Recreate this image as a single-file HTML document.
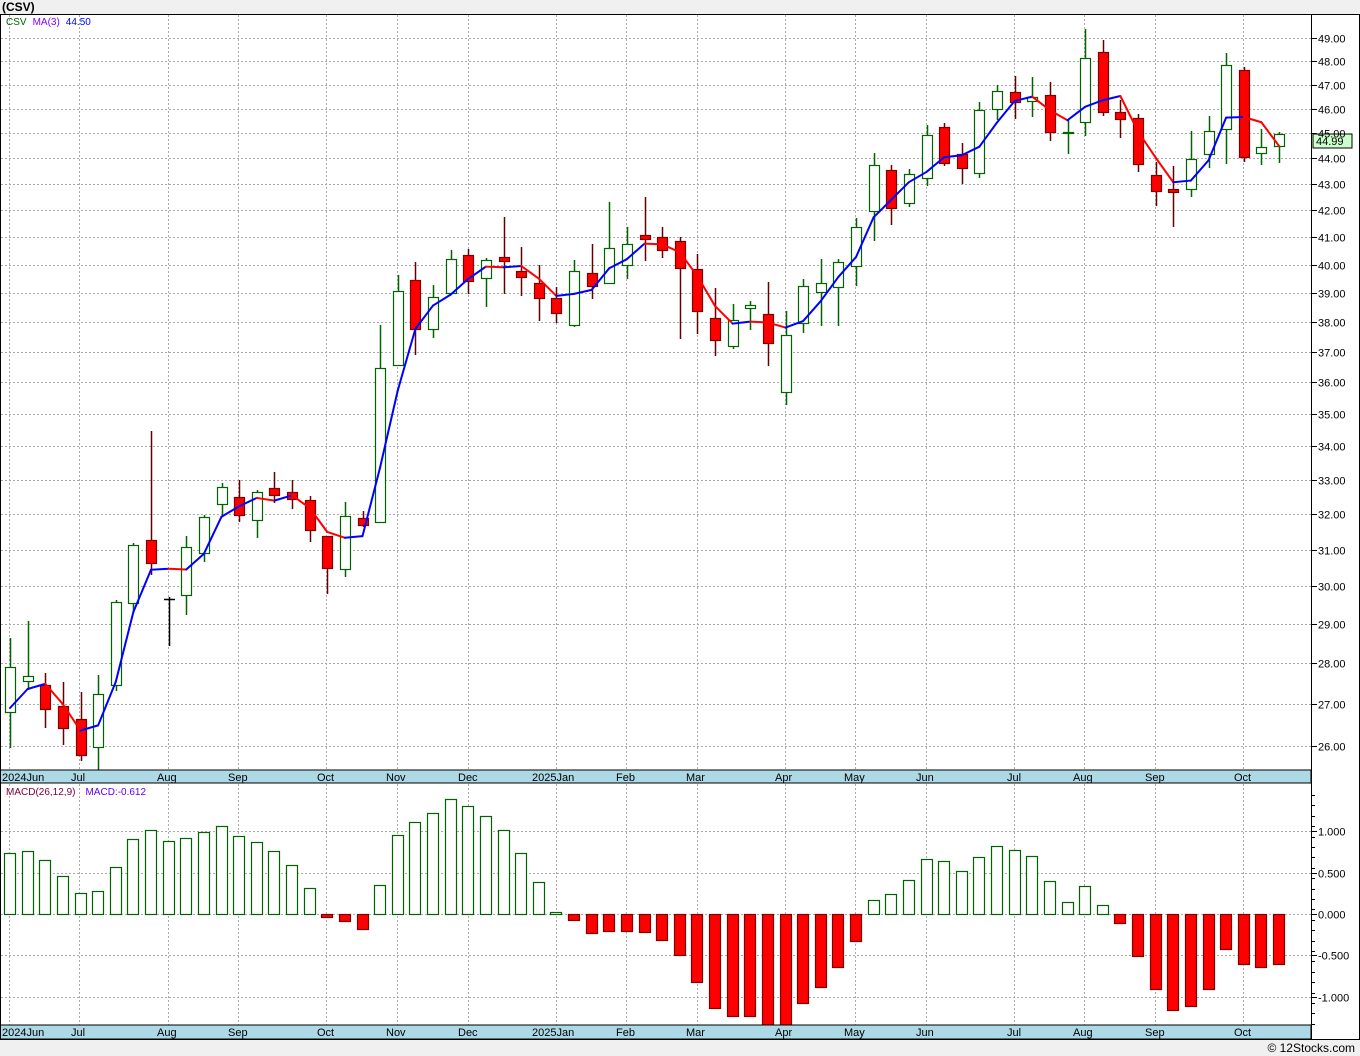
<!DOCTYPE html>
<html><head><meta charset="utf-8">
<style>
html,body{margin:0;padding:0;background:#f0f0f0;width:1360px;height:1056px;overflow:hidden;font-family:"Liberation Sans","DejaVu Sans",sans-serif;}
#wrap{position:relative;width:1360px;height:1056px;}
svg{position:absolute;left:0;top:0;}
</style></head>
<body><div id="wrap">
<svg id="c" width="1360" height="1056" xmlns="http://www.w3.org/2000/svg" font-family="Liberation Sans, DejaVu Sans, sans-serif">
<rect x="0" y="0" width="1360" height="1056" fill="#f0f0f0"/>
<rect x="0" y="14" width="1360" height="1026" fill="#ffffff"/>
<text x="2" y="11" font-size="12" font-weight="bold" fill="#000">(CSV)</text>
<g id="grid"></g>
<g id="candles"></g>
<g id="ma"></g>
<g id="macd"></g>
<!-- axis bands -->
<rect x="0" y="770" width="1311" height="13" fill="#add8e6" stroke="#000" stroke-width="1"/>
<rect x="0" y="1025" width="1311" height="14" fill="#add8e6" stroke="#000" stroke-width="1"/>
<line x1="0.5" y1="14" x2="0.5" y2="1040" stroke="#000"/>
<line x1="1311.5" y1="14" x2="1311.5" y2="1040" stroke="#000"/>
<line x1="0" y1="14.5" x2="1360" y2="14.5" stroke="#000"/>
<line x1="0" y1="1039.5" x2="1360" y2="1039.5" stroke="#000"/>
<line x1="1359.5" y1="14" x2="1359.5" y2="1040" stroke="#000"/>
<g id="labels" font-size="11" fill="#000">
<text x="2" y="781">2024Jun</text><text x="71" y="781">Jul</text><text x="157" y="781">Aug</text><text x="228" y="781">Sep</text><text x="317" y="781">Oct</text><text x="386" y="781">Nov</text><text x="458" y="781">Dec</text><text x="532" y="781">2025Jan</text><text x="616" y="781">Feb</text><text x="686" y="781">Mar</text><text x="775" y="781">Apr</text><text x="844" y="781">May</text><text x="916" y="781">Jun</text><text x="1007" y="781">Jul</text><text x="1073" y="781">Aug</text><text x="1145" y="781">Sep</text><text x="1234" y="781">Oct</text>
<text x="2" y="1036">2024Jun</text><text x="71" y="1036">Jul</text><text x="157" y="1036">Aug</text><text x="228" y="1036">Sep</text><text x="317" y="1036">Oct</text><text x="386" y="1036">Nov</text><text x="458" y="1036">Dec</text><text x="532" y="1036">2025Jan</text><text x="616" y="1036">Feb</text><text x="686" y="1036">Mar</text><text x="775" y="1036">Apr</text><text x="844" y="1036">May</text><text x="916" y="1036">Jun</text><text x="1007" y="1036">Jul</text><text x="1073" y="1036">Aug</text><text x="1145" y="1036">Sep</text><text x="1234" y="1036">Oct</text>
</g>
<text x="6" y="25" font-size="10"><tspan fill="#006400">CSV</tspan><tspan fill="#8000ff" dx="6">MA(3)</tspan><tspan fill="#0000ff" dx="6">44.50</tspan></text>
<text x="6" y="795" font-size="10"><tspan fill="#800040">MACD(26,12,9)</tspan><tspan fill="#6000ff" dx="10">MACD:-0.612</tspan></text>
<rect x="1313" y="134" width="39" height="14" fill="#ccffcc" stroke="#000"/>
<text x="1316" y="145" font-size="11" fill="#000">44.99</text>
<text x="1355" y="1052" font-size="12" fill="#000" text-anchor="end">© 12Stocks.com</text>
</svg>
<script>
var NS="http://www.w3.org/2000/svg";
function el(p,t,a){var e=document.createElementNS(NS,t);for(var k in a)e.setAttribute(k,a[k]);p.appendChild(e);return e;}
var grid=document.getElementById('grid'),cg=document.getElementById('candles'),mg=document.getElementById('ma'),md=document.getElementById('macd'),svg=document.getElementById('c');
function py(p){return 4386.3-1117.3*Math.log(p);}
var gx=[9,79,168,238,326,397,468,556,626,697,785,855,926,1014,1084,1155,1243];
gx.forEach(function(x){
 el(grid,'line',{x1:x+.5,y1:15,x2:x+.5,y2:770,stroke:'#aaa','stroke-dasharray':'2,2'});
 el(grid,'line',{x1:x+.5,y1:784,x2:x+.5,y2:1025,stroke:'#aaa','stroke-dasharray':'2,2'});
});
for(var p=26;p<=49;p++){
 var y=Math.round(py(p))+.5;
 el(grid,'line',{x1:1,y1:y,x2:1311,y2:y,stroke:'#aaa','stroke-dasharray':'2,2'});
 el(grid,'line',{x1:1311,y1:y,x2:1317,y2:y,stroke:'#000'});
 var t=el(svg,'text',{x:1318,y:y+4,'font-size':11,fill:'#000'});t.textContent=p.toFixed(2);
}
[[831,'1.000'],[873,'0.500'],[914,'0.000'],[955,'-0.500'],[997,'-1.000']].forEach(function(a){
 var y=a[0]+.5;
 el(grid,'line',{x1:1,y1:y,x2:1311,y2:y,stroke:'#aaa','stroke-dasharray':'2,2'});
 el(grid,'line',{x1:1311,y1:y,x2:1317,y2:y,stroke:'#000'});
 var t=el(svg,'text',{x:1318,y:y+4,'font-size':11,fill:'#000'});t.textContent=a[1];
});
for(var y=795;y<1025;y+=10.4){el(grid,'line',{x1:1311,y1:Math.round(y)+.5,x2:1315,y2:Math.round(y)+.5,stroke:'#000'});}
// candles: [type, open/top, bottom, high, low]  g=green(top=close), r=red(top=open)
var C=[
['g',667,712,638,748],['g',676,681,621,690],['r',685,709,673,728],['r',706,728,682,745],['r',719,755,692,761],
['g',694,747,675,770],['g',602,685,600,691],['g',545,603,543,612],['r',540,563,431,575],['k',599,599,597,646],
['g',547,595,536,615],['g',517,553,515,562],['g',487,504,483,517],['r',497,515,480,522],['g',492,520,490,538],
['r',488,495,472,503],['r',492,499,480,509],['r',500,530,496,542],['r',536,568,536,594],['g',516,569,502,577],
['r',518,525,511,527],['g',368,522,325,522],['g',291,365,275,365],['r',280,329,262,355],['g',297,329,285,338],
['g',259,293,250,293],['r',255,281,249,294],['g',260,278,258,307],['r',257,261,217,294],['r',271,277,247,296],
['r',283,298,265,321],['r',298,313,287,323],['g',271,325,260,327],['r',273,286,244,299],['g',248,283,202,283],
['g',244,265,227,279],['r',235,239,197,261],['r',237,250,227,258],['r',241,268,237,339],['r',269,311,254,334],
['r',318,340,288,356],['g',320,346,304,349],['g',305,308,301,330],['r',314,343,282,366],['g',335,392,311,405],
['g',286,323,279,333],['g',283,292,259,326],['g',262,287,259,326],['g',227,266,218,286],['g',165,211,153,241],
['r',170,208,165,225],['g',174,203,169,207],['g',135,178,125,186],['r',127,163,123,166],['r',154,168,143,184],
['g',110,173,102,178],['g',91,109,85,120],['r',92,102,76,119],['g',97,101,77,117],['r',95,132,82,141],
['g',132,133,120,154],['g',58,122,29,136],['r',52,112,40,116],['r',112,119,100,138],['r',118,164,114,172],
['r',175,191,162,206],['r',189,192,166,227],['g',159,189,131,197],['g',131,154,116,168],['g',65,129,53,164],
['r',70,157,67,162],['g',147,153,129,165],['g',134,146,132,163]];
var closes=[];
C.forEach(function(c,i){
 var x=Math.round(10+17.625*i);
 var col=c[0]=='g'?'#006400':(c[0]=='r'?'#660000':'#000');
 el(cg,'line',{x1:x+.5,y1:c[3],x2:x+.5,y2:c[4],stroke:col,'stroke-width':1.5});
 if(c[0]=='k'){el(cg,'line',{x1:x-5,y1:c[1]+.5,x2:x+6,y2:c[1]+.5,stroke:'#000','stroke-width':1.5});closes.push(c[1]);return;}
 var h=Math.max(c[2]-c[1],1);
 if(c[0]=='g'){el(cg,'rect',{x:x-4.5,y:c[1]+.5,width:10,height:h,fill:'#fff',stroke:'#006400','stroke-width':1.2});closes.push(c[1]);}
 else{el(cg,'rect',{x:x-4.5,y:c[1]+.5,width:10,height:h,fill:'#ff0000',stroke:'#800000','stroke-width':1.2});closes.push(c[2]);}
});
function pr(y){return Math.exp((4386.3-y)/1117.3);}
var ma=[];
for(var i=0;i<C.length;i++){
 if(i==0){ma.push(708);continue;}
 if(i==1){ma.push(689);continue;}
 ma.push(py((pr(closes[i])+pr(closes[i-1])+pr(closes[i-2]))/3));
}
for(var i=1;i<ma.length;i++){
 var x0=10+17.625*(i-1),x1=10+17.625*i;
 el(mg,'line',{x1:x0,y1:ma[i-1],x2:x1,y2:ma[i],stroke:ma[i]>ma[i-1]+0.5?'#ff0000':'#0000ff','stroke-width':2,'stroke-linecap':'round'});
}
var M=[853,851,860,876,893,891,867,839,830,841,838,832,826,836,842,851,865,888,917,921,929,885,835,822,813,799,806,816,830,853,882,912,920,933,931,931,932,940,955,982,1008,1016,1016,1025,1025,1003,987,967,941,900,894,880,859,861,871,857,846,850,856,881,902,886,905,923,956,989,1010,1006,989,949,964,967,964];
M.forEach(function(y,i){
 var x=Math.round(10+17.625*i);
 if(y<914){el(md,'rect',{x:x-5.5,y:y+.5,width:11,height:914-y,fill:'#fff',stroke:'#006400','stroke-width':1.2});}
 else{el(md,'rect',{x:x-5.5,y:914.5,width:11,height:Math.min(y,1025)-914,fill:'#ff0000',stroke:'#800000','stroke-width':1.2});}
});
</script>
</div></body></html>
